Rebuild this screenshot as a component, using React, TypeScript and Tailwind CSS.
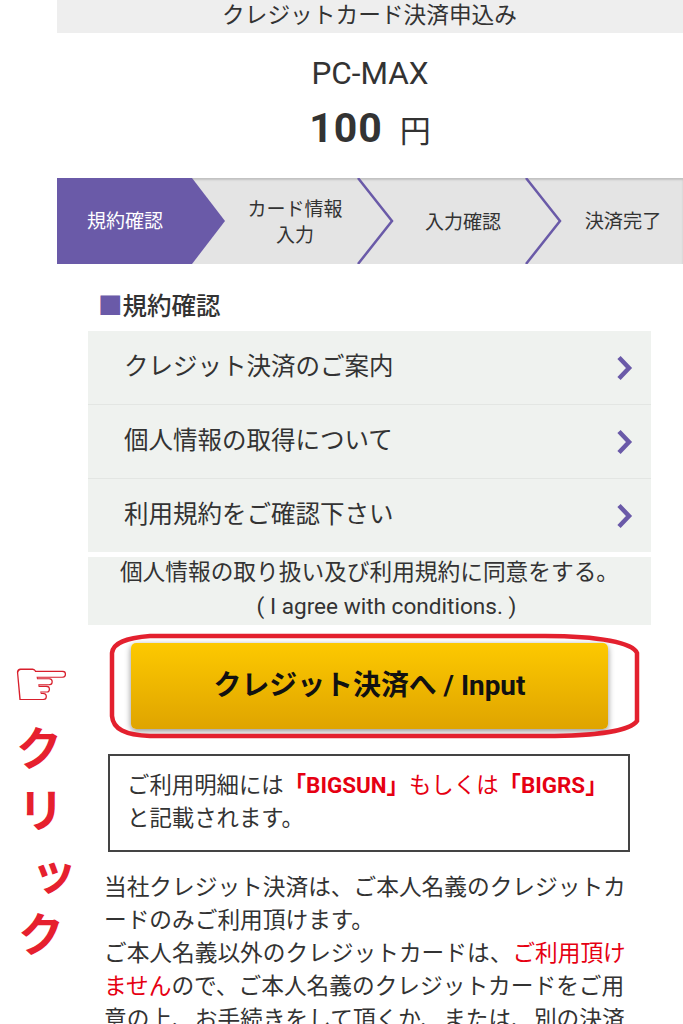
const STEPS = [
  { label: ['カード情報', '入力'] },
  { label: ['入力確認'] },
];

const ROWS = ['クレジット決済のご案内', '個人情報の取得について', '利用規約をご確認下さい'];

function RowArrow() {
  return (
    <svg width="18" height="26" viewBox="0 0 18 26" className="shrink-0">
      <path d="M3 2.5 L13 13 L3 23.5" fill="none" stroke="#6a5aa8" strokeWidth="4.5" />
    </svg>
  );
}

function StepChevron() {
  return (
    <svg width="38" height="86" viewBox="0 0 38 86" className="absolute right-[-2px] top-0">
      <path d="M1 0 L35 43 L1 86" fill="none" stroke="#6a5aa8" strokeWidth="2.5" />
    </svg>
  );
}

export default function App() {
  return (
    <div
      className="relative h-[1024px] w-[683px] overflow-hidden bg-white text-[#333]"
      style={{ fontFamily: 'Roboto, "Noto Sans CJK JP", sans-serif' }}
    >
      {/* Left annotation */}
      <div className="absolute left-[11px] top-[646px] text-[68px] leading-[76px] text-[#d81f2c]" style={{ fontFamily: '"DejaVu Sans", sans-serif' }}>
        ☞
      </div>
      <div className="absolute left-[13px] top-[718px] w-[70px] text-[46px] font-bold leading-[62px] text-[#e6202e]">
        <div className="pl-[3px]">ク</div>
        <div className="pl-[5px]">リ</div>
        <div className="pl-[18px]">ッ</div>
        <div className="pl-[5px]">ク</div>
      </div>

      {/* Red hand-drawn ring round the button */}
      <svg width="540" height="112" viewBox="0 0 540 112" className="absolute left-[105px] top-[631px]">
        <path
          d="M7 22 C8 12 20 7 45 5 L440 5 C495 5 528 12 532 22 L532 90 C525 100 490 105 440 105 L45 105 C20 104 8 98 7 85 Z"
          fill="none"
          stroke="#e3202e"
          strokeWidth="4.5"
        />
      </svg>

      <div className="ml-[57px]">
        <div className="flex h-[33px] items-center justify-center bg-[#eeeeee] pr-[1px] pb-[1px] text-[22.7px]">クレジットカード決済申込み</div>

        <div className="flex h-[145px] flex-col items-center">
          <div className="mt-[20px] text-[31.5px] leading-[42px]">PC-MAX</div>
          <div className="mt-[8px] flex items-baseline gap-[17px] leading-[50px]">
            <span className="text-[41px] font-bold tracking-[1px]">100</span>
            <span className="text-[31px]">円</span>
          </div>
        </div>

        {/* Stepper */}
        <div className="flex h-[86px] bg-[#e4e4e4] shadow-[inset_0_2px_2px_rgba(0,0,0,0.15)]">
          <div className="flex w-[168px] items-center bg-[#6a5aa8] pt-[3px] pl-[30px] text-[19px] text-white [clip-path:polygon(0_0,135px_0,168px_50%,135px_100%,0_100%)]">
            規約確認
          </div>
          {STEPS.map((step) => (
            <div key={step.label[0]} className="relative flex w-[168px] flex-col items-center justify-center pt-[4px] pr-[28px] text-[19px] leading-[26px]">
              {step.label.map((line) => (
                <div key={line}>{line}</div>
              ))}
              <StepChevron />
            </div>
          ))}
          <div className="flex flex-1 items-center justify-center pt-[3px] pl-[2px] text-[19.2px]">決済完了</div>
        </div>

        <div className="ml-[31px] w-[563px]">
          <div className="mt-[27px] ml-[10px] text-[24.5px] font-medium leading-[32px]">
            <span className="text-[#6a5aa8]">■</span>規約確認
          </div>

          <div className="mt-[8px] flex flex-col gap-px bg-[#e3e6e3]">
            {ROWS.map((row) => (
              <div key={row} className="flex h-[73px] items-center justify-between bg-[#eff2ef] pr-[17px] pl-[36px] text-[24.5px]">
                {row}
                <RowArrow />
              </div>
            ))}
          </div>

          <div className="mt-[5px] flex h-[68px] flex-col items-center bg-[#eff2ef] text-[22.7px] leading-[32px]">
            <div>個人情報の取り扱い及び利用規約に同意をする。</div>
            <div className="pl-[34px] text-[22.6px] leading-[36px]">( I agree with conditions. )</div>
          </div>

          <div className="mt-[18px] ml-[43px] flex h-[86px] w-[477px] items-center justify-center rounded-[5px] bg-gradient-to-b from-[#fdc900] to-[#dfa400] text-[27.9px] font-bold text-[#111] shadow-[0_2px_6px_rgba(0,0,0,0.45)]">
            クレジット決済へ / Input
          </div>

          <div className="mt-[25px] ml-[20px] h-[98px] w-[522px] whitespace-nowrap border-2 border-[#444] pt-[13px] pl-[17px] text-[22.4px] leading-[33px]">
            ご利用明細には<span className="font-bold text-[#e60012]">「BIGSUN」<span className="font-normal">もしくは</span>「BIGRS」</span>
            <br />
            と記載されます。
          </div>

          <div className="mt-[19px] ml-[16px] w-[527px] text-[22.7px] leading-[33px]">
            当社クレジット決済は、ご本人名義のクレジットカードのみご利用頂けます。
            <br />
            ご本人名義以外のクレジットカードは、<span className="text-[#e60012]">ご利用頂けません</span>ので、ご本人名義のクレジットカードをご用意の上、お手続きをして頂くか、または、別の決済
          </div>
        </div>
      </div>
    </div>
  );
}
